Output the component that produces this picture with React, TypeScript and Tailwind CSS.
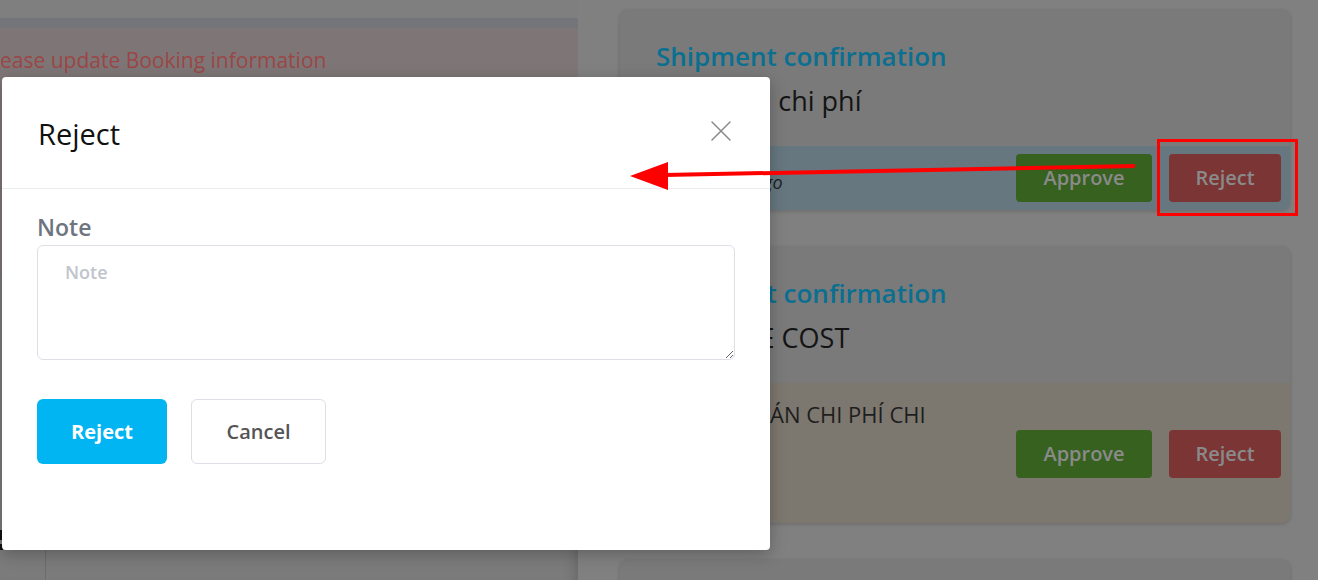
import { X } from 'lucide-react';

const font = "font-['Open_Sans',sans-serif]";

type CardProps = {
  title: string;
  subtitle: string;
  footerClass: string;
  note?: string;
  noteItalic?: boolean;
  stacked?: boolean;
};

function ActionButtons() {
  return (
    <div className="flex items-center gap-[17px]">
      <button className="w-[136px] h-[48px] rounded bg-[#36611f] text-[20px] font-semibold text-[#8a8a8a]">
        Approve
      </button>
      <button className="w-[112px] h-[48px] rounded bg-[#7b3535] text-[20px] font-semibold text-[#8a8a8a]">
        Reject
      </button>
    </div>
  );
}

function ConfirmCard({ title, subtitle, footerClass, note, noteItalic, stacked }: CardProps) {
  return (
    <div className="w-[670px] shrink-0 rounded-lg bg-[#7a7a7a] shadow-[0_1px_4px_rgba(0,0,0,0.18)] overflow-hidden">
      <div className="h-[136px] pl-9 pt-[28px]">
        <div className="text-[26px] leading-[36px] font-semibold text-[#0a6f91]">{title}</div>
        <div className="mt-[9px] text-[27px] leading-[36px] text-[#141414]">{subtitle}</div>
      </div>
      {stacked ? (
        <div className={`h-[140px] ${footerClass} pl-[40px] pr-[9px] pt-[15px]`}>
          <div className="text-[22px] leading-[32px] text-[#1e1e1e]">{note}</div>
          <div className="flex justify-end">
            <ActionButtons />
          </div>
        </div>
      ) : (
        <div className={`h-[64px] ${footerClass} pl-9 pr-[9px] flex items-center justify-between`}>
          <div className={`text-[18px] pt-[8px] text-[#1e1e1e] ${noteItalic ? 'italic' : ''}`}>{note}</div>
          <ActionButtons />
        </div>
      )}
    </div>
  );
}

function RejectModal() {
  return (
    <div className="absolute left-[2px] top-[77px] w-[768px] h-[473px] bg-white rounded shadow-[0_4px_16px_rgba(0,0,0,0.25)] flex flex-col">
      <div className="h-[112px] shrink-0 border-b border-[#e9ecef] pl-9 pr-[31px] flex items-center justify-between">
        <h2 className="text-[29px] font-normal text-[#111] pt-[3px]">Reject</h2>
        <button className="text-[#8a8a8a] mb-[4px]">
          <X className="w-[36px] h-[36px]" strokeWidth={1} />
        </button>
      </div>
      <div className="px-[35px] pt-[23px]">
        <label className="block text-[23px] leading-[30px] font-semibold text-[#6e7580]">Note</label>
        <textarea
          placeholder="Note"
          className="mt-[3px] block w-[698px] h-[115px] rounded-md border border-[#dcdfe6] px-[27px] py-[13px] text-[18px] font-semibold placeholder:text-[#c0c4cc] outline-none"
        />
        <div className="mt-[39px] flex gap-[24px]">
          <button className="w-[130px] h-[65px] rounded-md bg-[#00b5f1] text-white text-[20px] font-bold">Reject</button>
          <button className="w-[135px] h-[65px] rounded-md border border-[#dcdfe6] bg-white text-[#555] text-[20px] font-semibold">
            Cancel
          </button>
        </div>
      </div>
    </div>
  );
}

export default function App() {
  return (
    <div className={`relative w-[1318px] h-[580px] overflow-hidden bg-[#808080] ${font}`}>
      <div className="flex h-full">
        {/* left panel (dimmed) */}
        <div className="relative w-[578px] shrink-0 h-full bg-[#7b7b7b] shadow-[inset_-14px_0_12px_-10px_rgba(0,0,0,0.14)] overflow-hidden">
          <div className="h-[18px] bg-[#7f7f7f]" />
          <div className="h-[10px] bg-[#74757a]" />
          <div className="h-[250px] bg-[#7e7676] pt-[15px]">
            <div className="-ml-[18px] text-[21px] leading-[34px] text-[#9b4646] whitespace-nowrap">
              Please update Booking information
            </div>
          </div>
          <div className="h-[272px] flex flex-col justify-end gap-[4px]">
            <div className="w-[3px] h-[10px] bg-[#111]" />
            <div className="w-[3px] h-[6px] bg-[#111]" />
          </div>
          <div className="h-[30px] flex">
            <div className="w-[46px] border-r border-[#6c6c6c]" />
          </div>
        </div>

        {/* right panel (dimmed) */}
        <div className="flex-1 pl-[42px] pt-[10px] flex flex-col gap-[37px]">
          <ConfirmCard
            title="Shipment confirmation"
            subtitle="Xác nhận chi phí"
            footerClass="bg-[#66777f]"
            note="Oversized cargo"
            noteItalic
          />
          <ConfirmCard
            title="Shipment confirmation"
            subtitle="PACKAGE COST"
            footerClass="bg-[#7c776f]"
            note="THANH TOÁN CHI PHÍ CHI"
            stacked
          />
          <div className="w-[670px] h-[60px] shrink-0 rounded-lg bg-[#7a7a7a] shadow-[0_1px_4px_rgba(0,0,0,0.18)]" />
        </div>
      </div>

      <RejectModal />

      {/* annotation */}
      <svg className="absolute inset-0 pointer-events-none" width="1318" height="580" viewBox="0 0 1318 580">
        <rect x="1158.5" y="140.5" width="138" height="74" fill="none" stroke="#ff0000" strokeWidth="3" />
        <line x1="1135" y1="166" x2="664" y2="175" stroke="#ff0000" strokeWidth="4" />
        <polygon points="630,176 668,162 668,190" fill="#ff0000" />
      </svg>
    </div>
  );
}
